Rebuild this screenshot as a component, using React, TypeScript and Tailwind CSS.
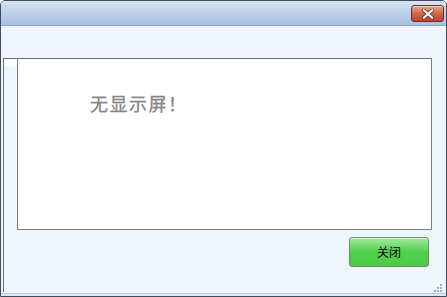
export default function App() {
  return (
    <div className="relative flex h-[297px] w-[447px] flex-col overflow-hidden rounded-t-[5px] border border-[#3d4b5c] bg-[#eef5fd] font-['Noto_Sans_CJK_SC',sans-serif]">
      {/* title bar */}
      <div className="flex h-[25px] shrink-0 items-start justify-end border-b border-[#8fa5c2] bg-gradient-to-b from-[#d6e3f3] via-[#bcd0ea] to-[#a7c0e1] pr-[2px] pt-[4px]">
        <button className="flex h-[17px] w-[33px] items-center justify-center rounded-[3px] border border-[#6e2c20] bg-gradient-to-b from-[#eaa58f] via-[#d0684e] to-[#b8442c] shadow-[inset_0_1px_0_rgba(255,255,255,0.5)]">
          <svg width="12" height="10" viewBox="0 0 12 10">
            <path d="M2 1.5 L10 8.5 M10 1.5 L2 8.5" stroke="#5a2a20" strokeWidth="3.6" strokeLinecap="square" />
            <path d="M2 1.5 L10 8.5 M10 1.5 L2 8.5" stroke="#ffffff" strokeWidth="2.2" strokeLinecap="square" />
          </svg>
        </button>
      </div>

      {/* client */}
      <div className="flex flex-1 flex-col pl-[2px] pt-[32px]">
        <div className="flex h-[234px] w-[429px] border-l border-t border-[#6e6e6e]">
          <div className="flex w-[13px] shrink-0 flex-col">
            <div className="h-[7px] bg-white" />
            <div className="flex-1 bg-[#eef5fd]" />
          </div>
          <div className="flex flex-1 flex-col">
            <div className="h-[171px] border-b border-l border-r border-[#7e7e7e] bg-white pl-[72px] pt-[32px]">
              <p className="text-[18px] leading-[24px] tracking-[1.5px] text-[#858585] [-webkit-text-stroke:0.3px_#858585]">无显示屏！</p>
            </div>
            <div className="flex justify-end pr-[3px] pt-[7px]">
              <button className="flex h-[30px] w-[80px] items-center justify-center rounded-[3px] border border-[#6f8f6f] bg-gradient-to-b from-[#a0e99a] via-[#4fd04b] to-[#4ccb48] text-[12px] leading-none text-black shadow-[inset_0_1px_0_rgba(255,255,255,0.6)]">
                关闭
              </button>
            </div>
          </div>
        </div>
      </div>

      {/* resize grip */}
      <div className="absolute bottom-[4px] right-[4px] grid grid-cols-3 gap-[1px]">
        <span className="h-[2px] w-[2px]" />
        <span className="h-[2px] w-[2px]" />
        <span className="h-[2px] w-[2px] bg-[#a3b3c6]" />
        <span className="h-[2px] w-[2px]" />
        <span className="h-[2px] w-[2px] bg-[#a3b3c6]" />
        <span className="h-[2px] w-[2px] bg-[#a3b3c6]" />
        <span className="h-[2px] w-[2px] bg-[#a3b3c6]" />
        <span className="h-[2px] w-[2px] bg-[#a3b3c6]" />
        <span className="h-[2px] w-[2px] bg-[#a3b3c6]" />
      </div>
      <div className="h-[3px] shrink-0 border-t border-[#b9cde6] bg-[#dce8f6]" />
    </div>
  );
}
